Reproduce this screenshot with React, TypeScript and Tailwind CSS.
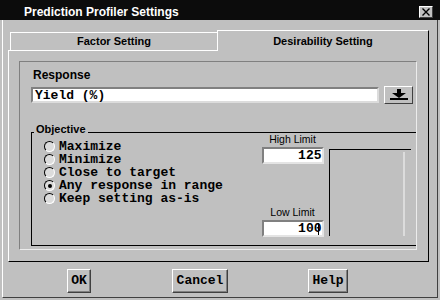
import React from 'react'

function Radio({ label, checked }: { label: string; checked?: boolean }) {
  return (
    <div className="flex h-[13px] items-center">
      <span className="flex h-[11px] w-[11px] items-center justify-center rounded-full border border-t-black border-l-black border-r-white border-b-white bg-[#dcdcdc]">
        {checked && <span className="h-[4px] w-[4px] rounded-full bg-black" />}
      </span>
      <span className="ml-[4px] whitespace-pre font-['Liberation_Mono',monospace] text-[13px] font-bold leading-[12px] text-black">
        {label}
      </span>
    </div>
  )
}

function LimitField({ value, cursor }: { value: string; cursor?: boolean }) {
  return (
    <div className="relative flex h-[17px] w-[62px] items-center justify-end border-2 border-t-[#808080] border-l-[#808080] border-r-[#e4e4e4] border-b-[#e4e4e4] bg-white">
      <span className="font-['Liberation_Mono',monospace] text-[13px] font-bold leading-none text-black">{value}</span>
      {cursor && <span className="absolute right-[3px] top-[1px] h-[12px] w-[1px] bg-black" />}
    </div>
  )
}

function DlgButton({ label, width, className }: { label: string; width: string; className?: string }) {
  return (
    <button
      className={`flex h-[24px] items-center justify-center border border-t-white border-l-white border-r-[#404040] border-b-[#404040] bg-[#c0c0c0] shadow-[inset_-1px_-1px_0_#808080] font-['Liberation_Mono',monospace] text-[13px] font-bold text-black ${width} ${className ?? ''}`}
    >
      {label}
    </button>
  )
}

export default function App() {
  return (
    <div className="flex h-[300px] w-[440px] flex-col bg-[#c0c0c0] font-['Liberation_Sans',Arial,sans-serif]">
      {/* title bar */}
      <div className="flex h-[20px] shrink-0 items-center justify-between bg-[#0c0c0c] pl-[24px] pr-[7px] pt-[4px]">
        <span className="text-[12px] font-bold leading-none text-white">Prediction Profiler Settings</span>
        <span className="flex h-[12px] w-[14px] items-center justify-center border border-t-white border-l-white border-r-[#404040] border-b-[#404040] bg-[#c0c0c0]">
          <svg width="8" height="8" viewBox="0 0 8 8">
            <path d="M0.5 0.5 L7.5 7.5 M7.5 0.5 L0.5 7.5" stroke="black" strokeWidth="1.4" />
          </svg>
        </span>
      </div>

      {/* body */}
      <div className="mx-[2px] mb-[2px] flex flex-1 flex-col border-l border-r border-b border-l-white border-r-[#404040] border-b-[#404040]">
        {/* tabs */}
        <div className="ml-[5px] mt-[10px] flex h-[21px] items-end">
          <div className="h-[1px] w-[2px] bg-white" />
          <div className="flex h-[19px] w-[207px] items-center justify-center border-t border-l border-b border-white text-[11px] font-bold text-black">
            Factor Setting
          </div>
          <div className="flex h-[21px] w-[212px] items-center justify-center border-t border-l border-r border-t-white border-l-white border-r-black text-[11px] font-bold text-black">
            Desirability Setting
          </div>
        </div>

        {/* tab panel */}
        <div className="ml-[5px] h-[211px] w-[421px] border-l border-r border-b border-l-white border-r-black border-b-black">
          {/* response box */}
          <div className="ml-[10px] mt-[10px] h-[189px] w-[398px] border border-t-[#808080] border-l-[#808080] border-r-[#ececec] border-b-[#ececec]">
            <div className="ml-[13px] mt-[6px] text-[12px] font-bold leading-[14px] text-black">Response</div>

            <div className="mt-[4px] flex items-start">
              <div className="ml-[11px] mt-[1px] flex h-[16px] w-[348px] items-center border-2 border-t-[#808080] border-l-[#808080] border-r-[#dcdcdc] border-b-[#dcdcdc] bg-white pl-[2px]">
                <span className="font-['Liberation_Mono',monospace] text-[13px] font-bold leading-none text-black">Yield (%)</span>
              </div>
              <button className="ml-[5px] flex h-[18px] w-[29px] items-center justify-center border border-t-white border-l-white border-r-[#404040] border-b-[#404040] bg-[#c0c0c0]">
                <svg width="20" height="12" viewBox="0 0 20 12">
                  <rect x="8" y="0" width="4" height="4" fill="black" />
                  <polygon points="3,4 17,4 10,9" fill="black" />
                  <rect x="1" y="9" width="18" height="2" fill="black" />
                </svg>
              </button>
            </div>

            {/* objective group */}
            <div className="relative ml-[11px] mt-[28px] flex h-[114px] w-[385px] border-t border-l border-b border-black">
              <span className="absolute left-[2px] top-[-10px] bg-[#c0c0c0] px-[2px] text-[11px] font-bold leading-[12px] text-black">
                Objective
              </span>

              <div className="flex w-[229px] flex-col pl-[12px] pt-[7px]">
                <Radio label="Maximize" />
                <Radio label="Minimize" />
                <Radio label="Close to target" />
                <Radio label="Any response in range" checked />
                <Radio label="Keep setting as-is" />
              </div>

              <div className="flex w-[63px] flex-col items-center">
                <span className="text-[10.5px] leading-[12px] text-black">High Limit</span>
                <div className="mt-[2px]">
                  <LimitField value="125" />
                </div>
                <span className="mt-[42px] text-[10.5px] leading-[12px] text-black">Low Limit</span>
                <div className="mt-[2px]">
                  <LimitField value="100" cursor />
                </div>
              </div>

              <div className="ml-[5px] mt-[16px] flex h-[87px] w-[82px] justify-end border-t border-l border-black pr-[6px] pt-[2px]">
                <div className="h-full w-[2px] bg-[#dcdcdc]" />
              </div>
            </div>
          </div>
        </div>

        {/* buttons */}
        <div className="mt-[7px] flex">
          <DlgButton label="OK" width="w-[24px]" className="ml-[64px]" />
          <DlgButton label="Cancel" width="w-[56px]" className="ml-[81px]" />
          <DlgButton label="Help" width="w-[40px]" className="ml-[80px]" />
        </div>
      </div>
    </div>
  )
}
